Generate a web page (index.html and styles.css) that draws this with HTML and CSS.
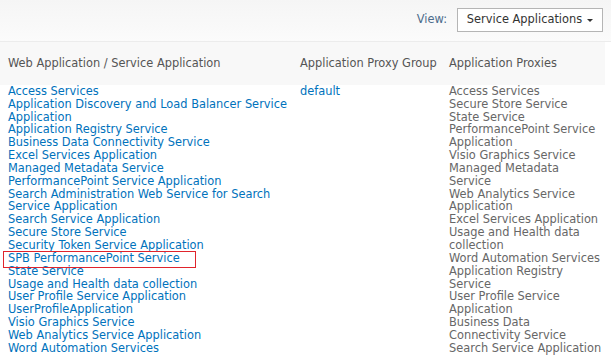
FILE: index.html
```html
<!DOCTYPE html>
<html lang="en">
<head>
    <meta charset="UTF-8">
    <title>Manage Service Applications</title>
    <link rel="stylesheet" href="styles.css">
</head>
<body>
    <div class="toolbar">
        <span class="view-label">View:</span>
        <button class="view-select">Service Applications <span class="arrow"></span></button>
    </div>

    <div class="grid">
        <div class="head col-app">Web Application / Service Application</div>
        <div class="head col-group">Application Proxy Group</div>
        <div class="head col-proxy">Application Proxies</div>

        <!-- service applications -->
        <ul class="apps col-app">
            <li><a href="#">Access Services</a></li>
            <li><a href="#">Application Discovery and Load Balancer Service Application</a></li>
            <li><a href="#">Application Registry Service</a></li>
            <li><a href="#">Business Data Connectivity Service</a></li>
            <li><a href="#">Excel Services Application</a></li>
            <li><a href="#">Managed Metadata Service</a></li>
            <li><a href="#">PerformancePoint Service Application</a></li>
            <li><a href="#">Search Administration Web Service for Search Service Application</a></li>
            <li><a href="#">Search Service Application</a></li>
            <li><a href="#">Secure Store Service</a></li>
            <li><a href="#">Security Token Service Application</a></li>
            <li class="marked"><a href="#">SPB PerformancePoint Service</a></li>
            <li><a href="#">State Service</a></li>
            <li><a href="#">Usage and Health data collection</a></li>
            <li><a href="#">User Profile Service Application</a></li>
            <li><a href="#">UserProfileApplication</a></li>
            <li><a href="#">Visio Graphics Service</a></li>
            <li><a href="#">Web Analytics Service Application</a></li>
            <li><a href="#">Word Automation Services</a></li>
        </ul>

        <div class="col-group"><a href="#">default</a></div>

        <ul class="proxies col-proxy">
            <li>Access Services</li>
            <li>Secure Store Service</li>
            <li>State Service</li>
            <li>PerformancePoint Service Application</li>
            <li>Visio Graphics Service</li>
            <li>Managed Metadata<br>Service</li>
            <li>Web Analytics Service Application</li>
            <li>Excel Services Application</li>
            <li>Usage and Health data collection</li>
            <li>Word Automation Services</li>
            <li>Application Registry Service</li>
            <li>User Profile Service Application</li>
            <li>Business Data Connectivity Service</li>
            <li>Search Service Application</li>
        </ul>
    </div>
</body>
</html>
```

FILE: styles.css
```css
* {
    box-sizing: border-box;
    margin: 0;
    padding: 0;
}

body {
    font-family: "DejaVu Sans", Verdana, sans-serif;
    font-size: 11.4px;
    line-height: 12.85px;
    color: #676767;
    background: #fff;
}

a {
    color: #0072bc;
    text-decoration: none;
}

ul {
    list-style: none;
}

.toolbar {
    height: 42px;
    display: flex;
    justify-content: flex-end;
    align-items: center;
    gap: 10px;
    padding: 0 8px 2px 0;
    background: linear-gradient(#f5f5f5, #fbfbfb);
    border-bottom: 1px solid #ececec;
}

.view-label {
    color: #4c6c8c;
}

.view-select {
    height: 24px;
    width: 146px;
    font: inherit;
    color: #333;
    background: #fff;
    border: 1px solid #b5b5b5;
    display: flex;
    align-items: center;
    justify-content: center;
    gap: 5px;
}

.arrow {
    border-left: 3px solid transparent;
    border-right: 3px solid transparent;
    border-top: 3px solid #333;
    margin-top: 2px;
}

.grid {
    display: grid;
    grid-template-columns: 292px 149px 156px;
    padding-left: 8px;
}

.head {
    color: #555;
    padding: 15px 0 15px;
    background: #f8f8f8;
    white-space: nowrap;
}

.grid > .head:first-child {
    margin-left: -8px;
    padding-left: 8px;
}

.marked {
    position: relative;
}

.marked::after {
    content: "";
    position: absolute;
    left: -5px;
    top: -1px;
    width: 191px;
    height: 15px;
    border: 1px solid #e0242c;
}
```
